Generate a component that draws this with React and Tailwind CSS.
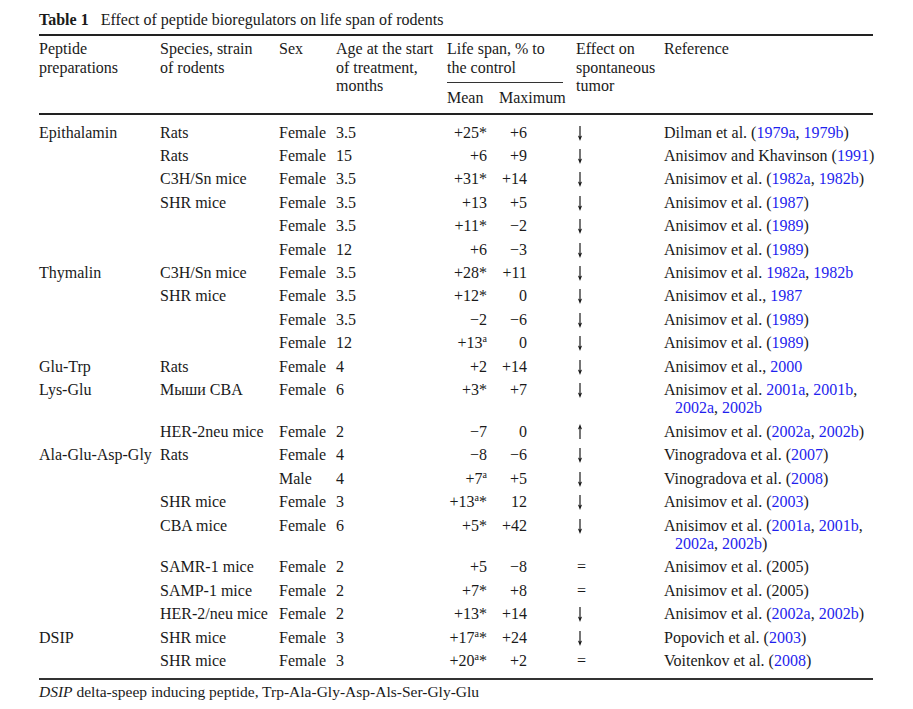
import React from "react";

const B = ({ children }) => <span className="text-[#1f1fee]">{children}</span>;
const A = () => <sup className="relative -top-[6px] text-[10px] leading-none">a</sup>;

const Down = () => (
  <svg width="8" height="15" viewBox="0 0 8 15" className="block mt-[2px]">
    <line x1="4" y1="0" x2="4" y2="11" stroke="#1a1a1a" strokeWidth="1.2" />
    <polygon points="1.9,9.6 4,15 6.1,9.6 4,10.8" fill="#1a1a1a" />
  </svg>
);
const Up = () => (
  <svg width="8" height="15" viewBox="0 0 8 15" className="block mt-[1px]">
    <line x1="4" y1="4" x2="4" y2="15" stroke="#1a1a1a" strokeWidth="1.2" />
    <polygon points="1.9,5.4 4,0 6.1,5.4 4,4.2" fill="#1a1a1a" />
  </svg>
);
const Eq = () => <span className="pl-[1px]">=</span>;

const rows = [
  ["Epithalamin", "Rats", "Female", "3.5", <>+25*</>, "+6", "d", <>Dilman et al. (<B>1979a</B>, <B>1979b</B>)</>],
  ["", "Rats", "Female", "15", "+6", "+9", "d", <>Anisimov and Khavinson (<B>1991</B>)</>],
  ["", "C3H/Sn mice", "Female", "3.5", "+31*", "+14", "d", <>Anisimov et al. (<B>1982a</B>, <B>1982b</B>)</>],
  ["", "SHR mice", "Female", "3.5", "+13", "+5", "d", <>Anisimov et al. (<B>1987</B>)</>],
  ["", "", "Female", "3.5", "+11*", "\u22122", "d", <>Anisimov et al. (<B>1989</B>)</>],
  ["", "", "Female", "12", "+6", "\u22123", "d", <>Anisimov et al. (<B>1989</B>)</>],
  ["Thymalin", "C3H/Sn mice", "Female", "3.5", "+28*", "+11", "d", <>Anisimov et al. <B>1982a</B>, <B>1982b</B></>],
  ["", "SHR mice", "Female", "3.5", "+12*", "0", "d", <>Anisimov et al., <B>1987</B></>],
  ["", "", "Female", "3.5", "\u22122", "\u22126", "d", <>Anisimov et al. (<B>1989</B>)</>],
  ["", "", "Female", "12", <>+13<A /></>, "0", "d", <>Anisimov et al. (<B>1989</B>)</>],
  ["Glu-Trp", "Rats", "Female", "4", "+2", "+14", "d", <>Anisimov et al., <B>2000</B></>],
  ["Lys-Glu", "Мыши CBA", "Female", "6", "+3*", "+7", "d", <>Anisimov et al. <B>2001a</B>, <B>2001b</B>,<br /><B>2002a</B>, <B>2002b</B></>],
  ["", "HER-2neu mice", "Female", "2", "\u22127", "0", "u", <>Anisimov et al. (<B>2002a</B>, <B>2002b</B>)</>],
  ["Ala-Glu-Asp-Gly", "Rats", "Female", "4", "\u22128", "\u22126", "d", <>Vinogradova et al. (<B>2007</B>)</>],
  ["", "", "Male", "4", <>+7<A /></>, "+5", "d", <>Vinogradova et al. (<B>2008</B>)</>],
  ["", "SHR mice", "Female", "3", <>+13<A />*</>, "12", "d", <>Anisimov et al. (<B>2003</B>)</>],
  ["", "CBA mice", "Female", "6", "+5*", "+42", "d", <>Anisimov et al. (<B>2001a</B>, <B>2001b</B>,<br /><B>2002a</B>, <B>2002b</B>)</>],
  ["", "SAMR-1 mice", "Female", "2", "+5", "\u22128", "e", <>Anisimov et al. (2005)</>],
  ["", "SAMP-1 mice", "Female", "2", "+7*", "+8", "e", <>Anisimov et al. (2005)</>],
  ["", "HER-2/neu mice", "Female", "2", "+13*", "+14", "d", <>Anisimov et al. (<B>2002a</B>, <B>2002b</B>)</>],
  ["DSIP", "SHR mice", "Female", "3", <>+17<A />*</>, "+24", "d", <>Popovich et al. (<B>2003</B>)</>],
  ["", "SHR mice", "Female", "3", <>+20<A />*</>, "+2", "e", <>Voitenkov et al. (<B>2008</B>)</>],
];

export default function App() {
  return (
    <div
      className="min-h-[709px] w-[913px] bg-white pt-[10px] pl-[39px] text-[#1a1a1a] text-[16px]"
      style={{ fontFamily: '"Liberation Serif", "Times New Roman", serif' }}
    >
      <div className="leading-[19px] h-[19px] flex">
        <span className="font-bold">Table 1</span>
        <span className="ml-[12px]">Effect of peptide bioregulators on life span of rodents</span>
      </div>
      <table className="mt-[5px] w-[834px] table-fixed border-collapse">
        <colgroup>
          <col className="w-[121px]" />
          <col className="w-[119px]" />
          <col className="w-[57px]" />
          <col className="w-[111px]" />
          <col className="w-[48px]" />
          <col className="w-[73px]" />
          <col className="w-[96px]" />
          <col className="w-[209px]" />
        </colgroup>
        <thead className="leading-[18.7px] font-normal">
          <tr className="border-t-2 border-[#222]">
            <th rowSpan={2} className="font-normal text-left align-top pt-[4px] border-b-2 border-[#222]">Peptide<br />preparations</th>
            <th rowSpan={2} className="font-normal text-left align-top pt-[4px] border-b-2 border-[#222]">Species, strain<br />of rodents</th>
            <th rowSpan={2} className="font-normal text-left align-top pt-[4px] border-b-2 border-[#222]">Sex</th>
            <th rowSpan={2} className="font-normal text-left align-top pt-[4px] border-b-2 border-[#222]">Age at the start<br />of treatment,<br />months</th>
            <th colSpan={2} className="font-normal text-left align-top pt-[4px] p-0">
              <div className="pb-[5px] mr-[5px] border-b border-[#333]">Life span, % to<br />the control</div>
            </th>
            <th rowSpan={2} className="font-normal text-left align-top pt-[4px] pl-[8px] border-b-2 border-[#222]">Effect on<br />spontaneous<br />tumor</th>
            <th rowSpan={2} className="font-normal text-left align-top pt-[4px] border-b-2 border-[#222]">Reference</th>
          </tr>
          <tr>
            <th className="font-normal text-left pt-[6px] pb-[5px] border-b-2 border-[#222]">Mean</th>
            <th className="font-normal text-left pt-[6px] pb-[5px] pl-[4px] border-b-2 border-[#222]">Maximum</th>
          </tr>
        </thead>
        <tbody className="leading-[18.4px]">
          <tr className="h-[7px]"><td colSpan={8} className="p-0" /></tr>
          {rows.map((r, i) => (
            <tr key={i}>
              <td className="align-top py-[2.5px] whitespace-nowrap">{r[0]}</td>
              <td className="align-top py-[2.5px] whitespace-nowrap">{r[1]}</td>
              <td className="align-top py-[2.5px]">{r[2]}</td>
              <td className="align-top py-[2.5px]">{r[3]}</td>
              <td className="align-top py-[2.5px] text-right pr-[8px] whitespace-nowrap">{r[4]}</td>
              <td className="align-top py-[2.5px] text-right pr-[41px] whitespace-nowrap">{r[5]}</td>
              <td className="align-top py-[2.5px] pl-[8px]">
                {r[6] === "d" ? <Down /> : r[6] === "u" ? <Up /> : <Eq />}
              </td>
              <td className="align-top py-[2.5px]">
                <div className="pl-[11px] -indent-[11px] whitespace-nowrap">{r[7]}</div>
              </td>
            </tr>
          ))}
          <tr className="h-[5px]"><td colSpan={8} className="p-0" /></tr>
        </tbody>
      </table>
      <div className="w-[834px] border-t-2 border-[#333] pt-[3px] leading-[18.4px] text-[15.5px]">
        <i>DSIP</i> delta-speep inducing peptide, Trp-Ala-Gly-Asp-Als-Ser-Gly-Glu
      </div>
    </div>
  );
}
